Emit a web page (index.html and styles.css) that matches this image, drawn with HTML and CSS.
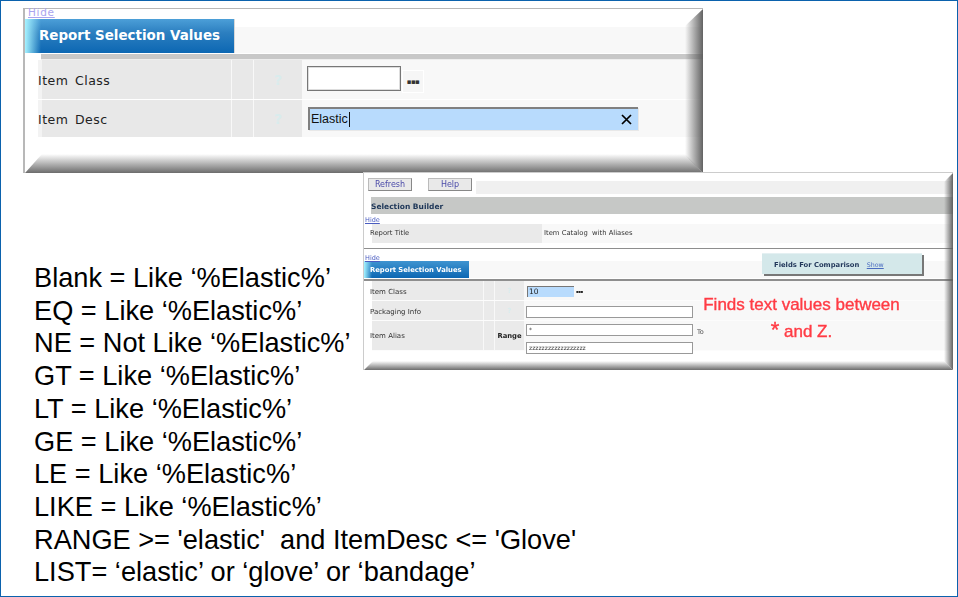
FILE: index.html
```html
<!DOCTYPE html>
<html>
<head>
<meta charset="utf-8">
<title>Report Selection Values</title>
<link rel="stylesheet" href="styles.css">
</head>
<body>
	<div class="slide">
		<div class="shot shot_large">
			<a class="hide_link" href="#">Hide</a>
			<div class="tab_row">
				<div class="tab">Report Selection Values</div>
			</div>
			<div class="divider"></div>
			<div class="row row_class">
				<div class="cell_label">Item Class</div>
				<div class="cell_op"></div>
				<div class="cell_help">?</div>
				<div class="cell_value">
					<div class="input_box"></div>
					<div class="lookup">&#9642;&#9642;&#9642;</div>
				</div>
			</div>
			<div class="row row_desc">
				<div class="cell_label">Item Desc</div>
				<div class="cell_op"></div>
				<div class="cell_help">?</div>
				<div class="cell_value">
					<div class="input_focus">
						<span class="typed">Elastic</span>
						<svg class="clear_icon" width="11" height="11" viewBox="0 0 11 11"><path d="M1 1L10 10M10 1L1 10" stroke="#000" stroke-width="1.7" fill="none"/></svg>
					</div>
				</div>
			</div>
			<div class="bevel_right"></div>
			<div class="bevel_bottom"></div>
		</div>

		<div class="shot shot_small">
			<div class="toolbar">
				<div class="btn btn_refresh">Refresh</div>
				<div class="btn btn_help">Help</div>
				<div class="toolbar_strip"></div>
			</div>
			<div class="section_bar">Selection Builder</div>
			<a class="hide_small" href="#">Hide</a>
			<div class="title_row">
				<div class="title_label">Report Title</div>
				<div class="title_value">Item Catalog &nbsp;with Aliases</div>
			</div>
			<div class="line_small"></div>
			<a class="hide_small hide_second" href="#">Hide</a>
			<div class="tab_row_small">
				<div class="tab_small">Report Selection Values</div>
			</div>
			<div class="line_small line_second"></div>
			<div class="s_row s_row1">
				<div class="s_label">Item Class</div>
				<div class="s_op"></div>
				<div class="s_help">?</div>
				<div class="s_value">
					<div class="s_focus">10</div>
					<div class="s_lookup">&#9642;&#9642;&#9642;</div>
				</div>
			</div>
			<div class="s_row s_row2">
				<div class="s_label">Packaging Info</div>
				<div class="s_op"></div>
				<div class="s_help">?</div>
				<div class="s_value">
					<div class="s_input"></div>
				</div>
			</div>
			<div class="s_row s_row3">
				<div class="s_label">Item Alias</div>
				<div class="s_op"></div>
				<div class="s_help s_range">Range</div>
				<div class="s_value s_value_range">
					<div class="s_line">
						<div class="s_input s_text">*</div>
						<span class="s_to">To</span>
					</div>
					<div class="s_input s_text">zzzzzzzzzzzzzzzzzz</div>
				</div>
			</div>
			<div class="compare_box">Fields For Comparison <a href="#">Show</a></div>
			<div class="note">Finds text values between<br><span class="note_star">*</span> and Z.</div>
			<div class="bevel_right bevel_right_small"></div>
			<div class="bevel_bottom bevel_bottom_small"></div>
		</div>

		<ul class="rules">
			<li>Blank = Like ‘%Elastic%’</li>
			<li>EQ = Like ‘%Elastic%’</li>
			<li>NE = Not Like ‘%Elastic%’</li>
			<li>GT = Like ‘%Elastic%’</li>
			<li>LT = Like ‘%Elastic%’</li>
			<li>GE = Like ‘%Elastic%’</li>
			<li>LE = Like ‘%Elastic%’</li>
			<li>LIKE = Like ‘%Elastic%’</li>
			<li>RANGE &gt;= 'elastic' &nbsp;and ItemDesc &lt;= 'Glove'</li>
			<li>LIST= ‘elastic’ or ‘glove’ or ‘bandage’</li>
		</ul>
	</div>
</body>
</html>
```

FILE: styles.css
```css
html, body {
	margin: 0;
	padding: 0;
	background: #fff;
}

.slide {
	position: relative;
	box-sizing: border-box;
	width: 958px;
	height: 597px;
	border: 1px solid #0b62ad;
	overflow: hidden;
}

/* the list under the two screenshots */
.rules {
	margin: 0;
	padding: 261px 0 0 33px;
	list-style: none;
	font: 27.2px/32.7px "Liberation Sans", Arial, sans-serif;
	color: #000;
}

/* both screenshots sit freely on the slide */
.shot {
	position: absolute;
	box-sizing: border-box;
	background: #fff;
	font-family: "DejaVu Sans", Verdana, sans-serif;
}

.shot_large {
	left: 22px;
	top: 7px;
	width: 680px;
	height: 165px;
	border-top: 1px solid #b8b8b8;
	border-left: 2px solid #b8b8b8;
}

.shot_small {
	left: 362px;
	top: 171px;
	width: 590px;
	height: 198px;
	border-top: 1px solid #ccc;
	border-left: 1px solid #ccc;
	padding-top: 5px;
	filter: blur(0.35px);
}

.bevel_right {
	position: absolute;
	right: 0;
	top: 0;
	bottom: 0;
	width: 18px;
	background: linear-gradient(to right, rgba(120,120,120,0), rgba(90,90,90,0.95));
	clip-path: polygon(0 17px, 100% 0, 100% 100%, 0 calc(100% - 18px));
}

.bevel_bottom {
	position: absolute;
	left: 0;
	right: 0;
	bottom: 0;
	height: 19px;
	background: linear-gradient(to bottom, rgba(150,150,150,0), #6c6c6c);
	clip-path: polygon(0 100%, 17px 0, calc(100% - 18px) 0, 100% 100%);
}

.bevel_right_small {
	width: 9px;
	clip-path: polygon(0 9px, 100% 0, 100% 100%, 0 calc(100% - 9px));
}

.bevel_bottom_small {
	height: 9px;
	clip-path: polygon(0 100%, 9px 0, calc(100% - 9px) 0, 100% 100%);
}

/* large shot */
.hide_link {
	display: block;
	height: 10px;
	padding-left: 3px;
	font-size: 10.5px;
	line-height: 6px;
	letter-spacing: 0.7px;
	color: #a9a4f0;
}

.tab_row {
	height: 34px;
	background: linear-gradient(to bottom, #fff 8px, #f8f8f8 8px);
}

.tab {
	box-sizing: border-box;
	width: 210px;
	height: 34px;
	padding: 8px 0 0 14px;
	font-size: 13.45px;
	font-weight: bold;
	line-height: 17px;
	color: #fff;
	background: linear-gradient(to right, #a5f2ff 0, rgba(165,242,255,0) 16px), linear-gradient(to bottom, #4c9fd8 0, #2c7fc0 40%, #0c67b3 100%);
	border-right: 1px solid #d8d8d8;
}

.divider {
	height: 5px;
	margin: 1px 0 0 16px;
	background: #c8c8c8;
	border-bottom: 1px solid #eee;
}

.row {
	display: flex;
	margin-left: 17px;
	background: #f8f8f8;
}

.row_class {
	height: 39px;
	margin-bottom: 1px;
}

.row_desc {
	height: 37px;
}

.cell_label {
	width: 193px;
	margin-right: 1px;
	margin-left: -4px;
	background: linear-gradient(to right, #f3f3f3 4px, #e8e8e8 4px);
	font-size: 12.5px;
	line-height: 41px;
	letter-spacing: 0.5px;
	word-spacing: 2px;
	color: #222;
}

.row_desc .cell_label {
	line-height: 39px;
}

.cell_op {
	width: 21px;
	margin-right: 1px;
	background: #e8e8e8;
}

.cell_help {
	width: 48px;
	background: #e8e8e8;
	text-align: center;
	font-size: 14px;
	font-weight: bold;
	line-height: 41px;
	color: #d9eced;
}

.row_desc .cell_help {
	line-height: 39px;
}

.cell_value {
	display: flex;
	flex: 1;
	padding-left: 5px;
}

.input_box {
	box-sizing: border-box;
	width: 94px;
	height: 25px;
	margin-top: 6px;
	background: #fff;
	border: 1px solid #777;
	box-shadow: inset 0 0 0 1px #ddd;
}

.lookup {
	width: 20px;
	height: 21px;
	margin: 11px 0 0 2px;
	background: #f6f6f6;
	box-shadow: 0 0 0 1px #fff;
	font-size: 7px;
	line-height: 22px;
	letter-spacing: -0.6px;
	text-align: center;
	color: #333;
}

.input_focus {
	display: flex;
	align-items: center;
	justify-content: space-between;
	box-sizing: border-box;
	width: 330px;
	height: 23px;
	margin: 7px 0 0 1px;
	padding: 0 6px 0 1px;
	background: #b8dbfd;
	border-top: 2px solid #808080;
	border-left: 2px solid #808080;
	box-shadow: 1px 1px 0 #e8e8e8;
	font: 12.5px "Liberation Sans", Arial, sans-serif;
	color: #111;
}

.typed {
	padding-right: 1px;
	border-right: 1px solid #111;
	line-height: 15px;
}

/* small shot */
.toolbar {
	display: flex;
	height: 19px;
}

.btn {
	box-sizing: border-box;
	width: 44px;
	height: 13px;
	margin-left: 4px;
	background: #e9e9e9;
	border: 1px solid #bbb;
	border-right-color: #888;
	border-bottom-color: #888;
	font-size: 8px;
	line-height: 11px;
	text-align: center;
	color: #4a4aa8;
}

.btn_help {
	margin-left: 16px;
}

.toolbar_strip {
	flex: 1;
	height: 13px;
	margin: 3px 0 0 4px;
	background: #f0f0f0;
}

.section_bar {
	height: 17px;
	margin-left: 7px;
	background: #c6c8c6;
	font-size: 7.5px;
	font-weight: bold;
	line-height: 19px;
	color: #1c3557;
}

.hide_small {
	display: block;
	height: 10px;
	padding-left: 1px;
	font-size: 6.5px;
	line-height: 13px;
	color: #4a5cc0;
}

.title_row {
	display: flex;
	height: 19px;
	margin-left: 8px;
	background: #f8f8f8;
	font-size: 6.8px;
	line-height: 19px;
	color: #333;
}

.title_label {
	width: 170px;
	margin-right: 2px;
	background: #eaeaea;
	text-indent: -2px;
}

.line_small {
	height: 1px;
	margin-top: 5px;
	background: #8e8e8e;
}

.hide_second {
	height: 9px;
	margin-top: 3px;
	line-height: 13px;
}

.tab_row_small {
	height: 17px;
	background: #f8f8f8;
}

.tab_small {
	box-sizing: border-box;
	width: 105px;
	height: 17px;
	padding-left: 6px;
	font-size: 6.8px;
	font-weight: bold;
	line-height: 18px;
	color: #fff;
	background: linear-gradient(to right, #a5f2ff 0, rgba(165,242,255,0) 8px), linear-gradient(to bottom, #3f94d0, #0c67b3);
}

.line_second {
	height: 2px;
	margin-top: 1px;
}

.s_row {
	display: flex;
	box-sizing: border-box;
	height: 20px;
	margin-left: 8px;
	background: #f8f8f8;
	border-bottom: 1px solid #fcfcfc;
}

.s_row3 {
	height: 30px;
}

.s_label {
	width: 111px;
	margin-right: 1px;
	background: #eaeaea;
	font-size: 7px;
	line-height: 22px;
	text-indent: -2px;
	color: #333;
}

.s_row3 .s_label {
	line-height: 30px;
}

.s_op {
	width: 10px;
	margin-right: 1px;
	background: #eaeaea;
}

.s_help {
	width: 29px;
	background: #eaeaea;
	font-size: 7px;
	font-weight: bold;
	line-height: 21px;
	text-align: center;
	color: #d9eced;
}

.s_range {
	font-size: 6.8px;
	line-height: 30px;
	color: #222;
}

.s_value {
	display: flex;
	flex: 1;
	padding: 5px 0 0 2px;
}

.s_value_range {
	flex-direction: column;
	gap: 1px;
	padding-top: 3px;
}

.s_line {
	display: flex;
}

.s_focus {
	box-sizing: border-box;
	width: 47px;
	height: 11px;
	margin-left: 1px;
	padding-left: 1px;
	background: #b8dbfd;
	border-top: 1px solid #777;
	border-left: 1px solid #777;
	font-size: 7.5px;
	line-height: 10px;
	color: #222;
}

.s_lookup {
	margin-left: 2px;
	font-size: 4px;
	line-height: 12px;
	letter-spacing: -0.4px;
	color: #222;
}

.s_input {
	box-sizing: border-box;
	width: 167px;
	height: 12px;
	background: #fff;
	border: 1px solid #999;
}

.s_text {
	padding-left: 2px;
	font-size: 6px;
	line-height: 10px;
	color: #333;
}

.s_to {
	margin-left: 4px;
	font-size: 6.5px;
	line-height: 17px;
	color: #555;
}

/* overlays on the small shot */
.compare_box {
	position: absolute;
	left: 398px;
	top: 80px;
	box-sizing: border-box;
	width: 160px;
	height: 21px;
	padding-left: 12px;
	background: #d4e8ea;
	box-shadow: 2px 2px 0 #777;
	border-top: 1px solid #e4f0f2;
	font-size: 6.8px;
	font-weight: bold;
	line-height: 21px;
	color: #24395c;
}

.compare_box a {
	margin-left: 5px;
	font-size: 6.3px;
	font-weight: normal;
	color: #4a6cc0;
}

.note {
	position: absolute;
	left: 339px;
	top: 118px;
	width: 197px;
	font: 17px/27px "Liberation Sans", Arial, sans-serif;
	text-align: center;
	white-space: nowrap;
	color: #ff3c45;
	-webkit-text-stroke: 0.4px #ff3c45;
	text-shadow: 0 0 2px #fff, 0 0 2px #fff;
}

.note_star {
	font-size: 22px;
	line-height: 0;
}
```
